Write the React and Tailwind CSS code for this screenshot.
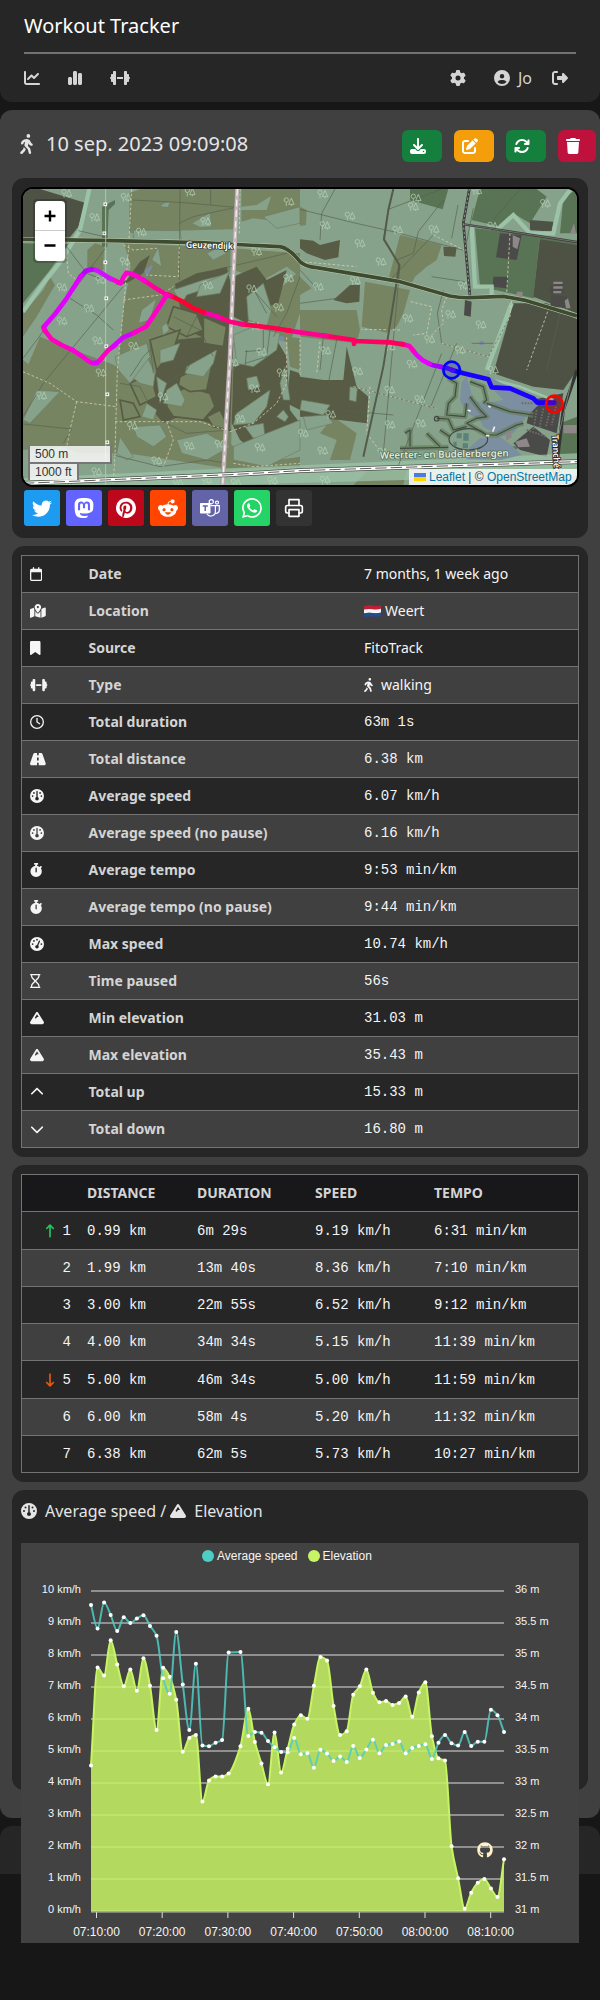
import React from "react";
import {
  FaChartLine, FaChartSimple, FaDumbbell, FaGear, FaCircleUser, FaRightFromBracket, FaPersonWalking,
  FaDownload, FaPenToSquare, FaArrowsRotate, FaTrash, FaRegCalendar, FaMapLocationDot, FaBookmark,
  FaRegClock, FaRoad, FaGauge, FaGaugeHigh, FaStopwatch, FaRegHourglass, FaMountain, FaChevronUp,
  FaChevronDown, FaArrowUpLong, FaArrowDownLong, FaGithub, FaRedditAlien,
} from "react-icons/fa6";
import { BsTwitter, BsMastodon, BsPinterest, BsWhatsapp } from "react-icons/bs";
import { FiPrinter } from "react-icons/fi";

function Header() {
  return (
    <header className="h-[102px] rounded-b-xl bg-[#262626] px-6">
      <div className="flex h-[52px] items-center text-xl text-white">Workout Tracker</div>
      <div className="h-[2px] bg-[#737373]" />
      <nav className="flex h-12 items-center justify-between pr-2 text-base text-[#d4d4d4]">
        <div className="flex items-center gap-7">
          <FaChartLine />
          <FaChartSimple className="w-3.5" />
          <FaDumbbell className="h-4 w-5" />
        </div>
        <div className="flex items-center">
          <FaGear className="mr-7" />
          <FaCircleUser className="mr-2" />
          <span className="mr-5">Jo</span>
          <FaRightFromBracket />
        </div>
      </nav>
    </header>
  );
}

function TitleBar() {
  return (
    <div className="flex h-[68px] justify-between pl-2">
      <div className="flex h-[68px] items-center text-xl text-[#e5e5e5]">
        <FaPersonWalking className="mr-[13px] w-[13px]" />
        <h2>10 sep. 2023 09:09:08</h2>
      </div>
      <div className="-mr-2 flex gap-3 pt-5 text-base text-white">
        <button className="flex h-8 w-10 items-center rounded-md bg-[#15803d] pl-2"><FaDownload /></button>
        <button className="flex h-8 w-10 items-center rounded-md bg-[#f59e0b] pl-2"><FaPenToSquare /></button>
        <button className="flex h-8 w-10 items-center rounded-md bg-[#15803d] pl-2"><FaArrowsRotate /></button>
        <button className="flex h-8 w-[38px] items-center rounded-md bg-[#be123c] pl-2"><FaTrash className="w-3.5" /></button>
      </div>
    </div>
  );
}

const TREES = [
  [200, 70], [378, 82], [284, 142], [424, 186], [617, 154], [570, 66], [867, 95], [770, 245], [866, 325], [375, 274],
  [186, 352], [267, 415], [186, 453], [624, 346], [293, 512], [401, 528], [767, 468], [785, 546], [836, 412], [755, 356],
  [302, 330], [968, 72], [1248, 84], [1240, 110], [1050, 138], [975, 166], [1193, 180], [1302, 178], [1080, 220], [1143, 275],
  [1636, 100], [1478, 168], [1430, 62], [1066, 332], [955, 350], [1390, 346], [1224, 445], [1352, 433], [1443, 464],
  [1289, 508], [1380, 540], [977, 542], [1170, 530], [1236, 582], [1073, 604], [1169, 660], [1259, 688], [992, 733],
  [1170, 764], [968, 842], [910, 790], [1148, 846], [125, 677], [303, 608], [489, 680], [568, 828], [397, 768], [720, 746],
  [764, 656], [846, 608], [780, 832], [660, 822], [470, 872], [708, 938], [534, 938], [620, 930], [818, 932], [975, 930],
  [1262, 760], [1480, 600], [1366, 940], [290, 905], [700, 578], [208, 940],
];

const HEATH = [
  "388,70 420,57 708,57 700,178 520,182 470,195 388,188",
  "262,240 285,220 312,228 310,300 262,296",
  "372,220 560,228 692,240 690,300 640,500 700,600 690,945 660,892 380,850 345,850 352,600 370,420 392,290",
  "69,430 130,360 150,320 165,345 110,440 69,500",
  "69,620 120,500 220,540 330,580 352,590 345,850 235,850 190,830 69,840",
  "724,57 900,57 850,75 810,80 770,105 724,110",
  "724,155 760,145 900,160 900,57 820,57 800,120 724,120",
  "900,420 1070,420 1080,480 1070,520 900,500",
  "1095,335 1230,360 1210,430 1190,470 1160,488 1085,470",
  "1200,195 1325,225 1310,270 1280,290 1245,320 1230,350 1165,330",
  "700,235 900,250 900,320 860,290 790,330 700,300",
  "750,440 900,300 900,430 870,520 760,480",
  "1000,740 1070,790 1050,870 990,870 1010,810 960,790",
  "69,570 160,640 69,740",
  "1100,905 1220,900 1210,945 1060,945",
  "900,110 920,120 918,165 900,168",
  "900,320 935,355 900,375",
  "690,820 760,880 900,860 900,890 690,900",
  "860,500 900,505 900,600 870,590",
];

const BROWN = [
  "525,342 590,310 640,300 680,290 690,330 700,470 690,560 625,510 560,480 540,410",
  "700,320 770,290 800,330 860,300 835,400 770,420 740,460 700,440",
  "470,600 520,510 620,500 700,520 690,780 600,750 560,730 490,760 440,700",
  "700,590 780,560 830,510 860,560 870,720 900,760 890,810 800,870 720,810 695,760",
  "900,620 970,630 1030,630 1040,530 1070,650 1105,680 1100,760 1020,750 900,740",
  "900,208 940,212 960,225 1020,210 1015,262 975,270 920,250 900,235",
  "1000,390 1050,345 1080,345 1078,395 1040,400",
  "1330,230 1370,232 1366,260 1332,258",
  "345,345 380,330 420,275 450,255 430,310 380,340",
  "870,600 900,610 900,720 860,700",
];

const ISLANDS = [
  "520,360 610,330 690,310 650,345 560,375 545,402",
  "425,420 470,385 450,450 415,460",
  "485,470 500,458 508,480 490,495",
  "700,495 760,470 840,490 830,540 760,590 710,580",
  "740,380 790,340 815,420 800,470 745,450",
  "500,660 530,640 555,690 545,710 490,700",
  "600,345 680,310 690,300 660,370 590,380",
  "560,590 650,540 640,580 610,620 555,610",
  "740,625 770,618 780,650 745,660",
  "710,730 810,660 800,710 760,760 700,765",
  "840,640 855,590 870,690 850,690",
  "735,770 790,760 795,800 760,805",
  "700,830 800,790 900,750 900,840 800,890 700,870",
  "830,740 850,720 865,740 855,755",
  "395,620 430,540 465,610 460,650 420,640",
  "470,620 500,640 480,700",
  "345,560 440,520 450,560 390,640 355,600",
  "440,700 470,720 460,750 425,740",
  "110,660 180,665 90,760 69,750",
  "480,540 540,520 520,570 480,580",
  "400,770 480,765 500,800 460,830 410,800",
  "530,810 620,790 690,830 620,870 545,850",
  "360,800 400,860 380,870 350,850",
  "905,690 990,705 970,735 900,720",
  "910,740 980,735 1000,760 920,780",
  "575,160 630,128 635,170 600,172",
  "490,100 510,95 505,112 480,110",
  "400,180 540,182 545,215 400,215",
  "455,270 475,230 485,290",
  "620,250 660,230 680,250 640,270",
  "790,140 900,110 900,160 830,175",
  "1050,650 1072,655 1068,695 1048,690",
];

const MEADOW = [
  "69,220 205,222 150,300 69,400",
  "1230,57 1345,57 1328,118 1230,90",
  "1440,57 1610,57 1640,80 1590,160 1540,130 1500,170 1415,150",
  "1425,175 1620,195 1600,385 1440,350",
  "1620,195 1731,215 1731,300 1600,385",
  "1690,85 1731,57 1731,190 1680,190",
  "1680,760 1731,740 1731,870 1680,870",
  "1720,450 1731,450 1731,500 1700,480",
  "306,110 345,90 345,102 326,120 322,230 306,230",
  "1455,820 1560,830 1500,870 1440,850",
];

const FARM = [
  "69,57 120,57 255,98 235,170 205,208 69,205",
  "1620,208 1731,225 1731,430 1600,380",
  "1540,400 1640,400 1731,448 1731,600 1690,660 1600,650 1480,610",
  "1590,150 1660,155 1655,185 1590,180",
];

const GREYS = [
  "1500,190 1565,195 1550,270 1488,262",
  "1480,320 1525,320 1520,355 1478,350",
  "1395,390 1415,395 1412,440 1392,436",
  "1540,820 1600,770 1650,810 1640,860 1560,840",
  "1595,690 1690,670 1670,790 1580,760",
  "1650,350 1690,335 1690,370 1650,372",
  "1655,375 1700,380 1715,415 1650,410",
];

const TRACKS = [
  "69,565 320,230 M369,350 130,640 69,740",
  "210,385 290,435 340,480",
  "235,182 313,200",
  "200,230 260,310 300,325",
  "395,90 540,97 708,112",
  "540,57 538,330",
  "632,57 632,105",
  "538,160 580,140 708,112",
  "520,355 690,290 860,250",
  "900,118 1060,158 1180,185 1395,242",
  "1180,57 1165,120 1150,210 1200,285 1150,850",
  "1005,57 965,130 960,210",
  "1325,57 1165,118",
  "1330,90 1255,185 1240,250 1190,270",
  "1420,115 1400,215 M1374,105 1355,205",
  "1300,195 1170,330",
  "1330,360 1312,430 1325,520 1465,560",
  "1530,440 1465,560",
  "1295,320 1395,335",
  "1010,510 985,640 M970,500 960,600",
  "1415,520 1480,520 M1060,650 1310,715",
  "1010,720 1180,735",
  "1325,550 1190,900",
  "1370,520 1290,715",
  "69,762 215,777 190,820",
  "740,540 735,590 M790,480 790,540 735,545 M810,480 800,560 735,580",
  "390,620 430,560 450,540 M360,640 420,650 440,690",
  "500,760 560,790 690,780",
  "340,855 480,890 620,870 670,878",
  "450,520 460,610 M600,520 560,600 500,640",
  "520,440 600,480 640,560 M600,420 560,500",
  "700,320 760,360 830,440 M740,320 800,430",
  "900,320 860,430 820,500",
  "1680,430 1640,600",
  "1560,57 1480,150",
  "900,300 955,360 M900,400 1010,385",
];

const DASHED = [
  "395,57 386,230 370,420 352,600 345,850 340,940",
  "69,605 150,640 230,695 350,710",
  "230,695 210,780 200,830",
  "538,230 535,320 440,315",
  "370,390 480,375 520,350",
  "345,755 500,755 600,755 690,785",
  "500,755 520,810 490,890",
  "690,785 760,760 830,700 860,640 860,500",
  "700,880 760,890 900,880",
  "1300,195 1395,242",
  "1200,480 1085,478",
  "1232,395 1295,410 1280,490 1240,495",
  "1340,380 1325,420 1330,460 1290,500",
  "1325,520 1465,560 1530,440 1535,390",
  "900,615 900,500",
  "1060,650 1310,715",
  "1530,190 1520,370",
  "1643,425 1580,600",
  "200,260 205,310 230,330",
  "720,57 718,190",
  "370,225 400,240 470,235",
  "900,275 960,280 1070,290",
  "1110,650 1100,790 1130,830",
  "960,515 950,610",
];

const RESORT_PATHS = [
  "1345,625 1370,640 1365,680 1345,700 1340,735 1395,740 1400,700",
  "1410,635 1450,650 1460,690 1450,700",
  "1410,680 1440,720 1460,740 1430,745 1400,760 1460,795 1490,795 1550,765 1570,760",
  "1310,745 1345,747 1360,780 1400,770",
  "1460,700 1530,725 1600,735",
  "1230,830 1230,780 1215,790 M1280,790 1320,830 M1320,780 1350,800 M1200,835 1345,832",
];

const SEGMENTS = [
  ["#1a00ff", "1663,698 1612,698 1600,685 1530,655 1475,652 1465,628 1390,610 1355,600"],
  ["#5a10f0", "1360,601 1340,594 1320,590"],
  ["#a800ff", "1325,591 1300,586 1285,580"],
  ["#e800ff", "1290,582 1270,572 1250,555 1238,540"],
  ["#ff00c0", "1240,542 1228,528 1205,522"],
  ["#ff0060", "1210,523 1170,517 1062,513 1062,522 1062,510 970,497"],
  ["#ff0090", "980,498 900,487 860,481"],
  ["#ff0050", "870,482 820,474 720,462"],
  ["#ff0080", "730,463 690,455 655,441"],
  ["#f800b0", "660,443 635,434 605,425"],
  ["#ff0030", "612,427 580,415 545,393 505,374"],
  ["#ff00a0", "512,378 500,374 460,350 430,330"],
  ["#ff00d0", "435,333 405,315 380,308 370,322 362,340 325,322"],
  ["#d010ff", "332,327 295,303 280,298 262,301"],
  ["#b800ff", "275,298 258,302 240,322"],
  ["#e000ff", "244,316 225,346 200,385 165,432 130,472 138,486"],
  ["#ff00c0", "132,478 155,508 185,525 220,541"],
  ["#f800d8", "215,538 245,558 265,573 276,579 290,579"],
  ["#e000ff", "280,579 292,578 305,565"],
  ["#ff00c0", "300,570 325,540 345,526"],
  ["#d800ff", "338,530 370,502 410,485"],
  ["#ff00c8", "400,489 438,470 465,430 500,376"],
];

function Tree({ x, y }) {
  return (
    <g transform={`translate(${x} ${y})`} fill="none" stroke="#b5d3b6" strokeWidth="2.2">
      <circle cx="-8" cy="-5" r="6.5" />
      <path d="M-8 2V13M7 -11L-1 8H15ZM7 8V13" />
    </g>
  );
}

function MapCanvas() {
  const poly = (list, fill) => list.map((p, i) => <polygon key={i} points={p} fill={fill} />);
  return (
    <svg className="block h-[296px] w-[554px]" viewBox="69 57 1662 888">
      <rect x="69" y="57" width="1662" height="888" fill="#87a28b" />
      {poly(HEATH, "#778462")}
      {poly(BROWN, "#595c45")}
      <g fill="#778462" stroke="#595c45" strokeWidth="5">
        <polygon points="505,680 560,650 630,670 645,710 610,750 520,740 500,710" />
        <polygon points="540,620 600,590 635,590 620,660 570,665 535,645" />
        <polygon points="390,640 450,610 470,680 420,705" />
        <polygon points="360,690 400,700 420,740 370,750" />
        <polygon points="520,410 590,430 610,480 560,500 500,470" />
        <polygon points="610,440 680,470 670,530 610,520" />
        <polygon points="450,510 540,480 520,540 470,600" />
        <polygon points="620,740 660,720 690,780 640,770" />
      </g>
      <g fill="#87a28b" stroke="#6d7d62" strokeWidth="2">
        {ISLANDS.map((p, i) => <polygon key={i} points={p} />)}
      </g>
      {poly(MEADOW, "#587454")}
      {poly(FARM, "#4d5245")}
      {poly(GREYS, "#4a4a48")}
      <g fill="none" stroke="#9bc3a7" strokeWidth="13">
        <path d="M268 57L240 180L185 270L130 340L69 425" />
        <path d="M1415 170L1425 350H1475V375M1535 400L1460 600M1490 180L1540 135L1590 190H1660L1680 100L1710 60" />
        <path d="M1480 630L1560 650L1660 690" strokeWidth="8" />
      </g>
      <path d="M69 925L690 895L1731 850V915L690 945H69Z" fill="#9bc3a7" opacity=".75" />

      <path d="M1385 635L1400 620L1420 690L1450 700L1510 690L1480 660L1470 620L1540 660L1620 700L1580 740L1540 790L1500 800L1450 770L1440 750L1400 730L1380 690Z" fill="#7c8fa0" />
      <path d="M1410 830L1440 805L1500 800L1540 830L1565 855L1500 870L1400 868Z" fill="#7c8fa0" />
      <path d="M438 325L435 300L455 285L458 290Z" fill="#7a8ba5" />
      <circle cx="845" cy="506" r="8" fill="#7a8ba5" />
      <circle cx="1445" cy="519" r="7" fill="#7a8ba5" />
      <g fill="none" stroke="#66825f" strokeWidth="16" strokeLinejoin="round" opacity=".7">
        {RESORT_PATHS.map((p, i) => <path key={i} d={"M" + p} />)}
      </g>
      <g fill="none" stroke="#444843" strokeWidth="3.5" strokeLinejoin="round">
        {RESORT_PATHS.map((p, i) => <path key={i} d={"M" + p} />)}
        <ellipse cx="1405" cy="808" rx="58" ry="32" />
        <circle cx="1310" cy="746" r="7" />
      </g>
      <g fill="#8d8787">
        <path d="M1538 195L1560 205L1552 238L1538 230Z" />
        <path d="M1660 335H1688V342H1660ZM1660 349H1688V356H1660ZM1660 363H1684V370H1660Z" />
        <path d="M1515 790L1530 782L1536 800L1520 812ZM1545 815L1580 805L1590 830L1555 832ZM1690 765H1730V790H1690Z" />
        <path d="M1710 190L1722 160L1728 190ZM1550 365H1568V382H1550ZM1694 392L1704 385L1712 415H1698Z" />
      </g>
      <g fill="none" stroke="#6f6a68" strokeWidth="6" strokeDasharray="5 4">
        <path d="M1610 720L1600 780M1630 715L1618 775M1650 720L1638 770M1668 710L1655 765M1565 700H1600M1580 780L1640 800" />
      </g>
      <g fill="#5b8279">
        <path d="M1370 790H1385V805H1370ZM1390 790H1406V812H1390ZM1360 815H1370V828H1360ZM1388 820H1404V835H1388Z" />
      </g>

      <g fill="none" stroke="#566150" strokeWidth="2">
        {TRACKS.map((p, i) => <path key={i} d={"M" + p} />)}
      </g>
      <g fill="none" stroke="#d8cfae" strokeWidth="2.4" strokeDasharray="8 6">
        {DASHED.map((p, i) => <path key={i} d={"M" + p} />)}
      </g>
      {TREES.map(([x, y], i) => <Tree key={i} x={x} y={y} />)}

      <path d="M1180 57L1165 120L1152 208L1198 285L1150 590L1090 860" fill="none" stroke="#555b4b" strokeWidth="6" />
      <g fill="none" strokeLinejoin="round">
        <path d="M1408 57L1390 160L1410 380" stroke="#3c3c3c" strokeWidth="8" />
        <path d="M1408 57L1390 160L1410 380" stroke="#c9c3c3" strokeWidth="2" strokeDasharray="7 6" />
        <path d="M1392 163L1731 216" stroke="#3c3c3c" strokeWidth="7" />
        <path d="M1392 163L1731 216" stroke="#8d8a86" strokeWidth="2" />
        <path d="M1731 600L1690 720L1672 870" stroke="#333633" strokeWidth="10" />
        <path d="M1715 630L1675 800" stroke="#9a9d96" strokeWidth="2" />
        <path d="M69 208L300 211L600 218L840 230Q870 236 900 275Q915 290 950 293L1200 335L1350 378Q1380 384 1410 383L1510 379L1580 392L1731 438" stroke="#c0cfb0" strokeWidth="14" />
        <path d="M69 208L300 211L600 218L840 230Q870 236 900 275Q915 290 950 293L1200 335L1350 378Q1380 384 1410 383L1510 379L1580 392L1731 438" stroke="#3f4b30" strokeWidth="11" />
        <path d="M712 57L698 360L690 560L668 945" stroke="#9c9092" strokeWidth="14" />
        <path d="M712 57L698 360L690 560L668 945" stroke="#c5b9bb" strokeWidth="11" />
        <path d="M712 57L698 360L690 560L668 945" stroke="#f4eeee" strokeWidth="4" strokeDasharray="20 12" />
        <path d="M69 940L690 914L900 902L1731 875" stroke="#4b5047" strokeWidth="14" />
        <path d="M69 940L690 914L900 902L1731 875" stroke="#ffffff" strokeWidth="10" />
        <path d="M69 940L690 914L900 902L1731 875" stroke="#3c3c3c" strokeWidth="2.5" strokeDasharray="34 12" />
      </g>
      <path d="M317 57V945" stroke="#b9cdb5" strokeWidth="2.5" />
      {[[316, 103], [313, 190], [316, 277], [319, 385], [319, 529], [322, 673], [322, 817]].map(([x, y]) => (
        <rect key={y} x={x - 4} y={y - 4} width="8" height="8" fill="#777" stroke="#fff" strokeWidth="3" />
      ))}
      <path d="M1478 785L1484 770M1403 720L1412 724M1465 708L1472 712M1458 797H1468" stroke="#eee" strokeWidth="5" />

      <g fontFamily="'Noto Sans', sans-serif" fontWeight="600" fill="#fff" strokeWidth="5" strokeLinejoin="round" lengthAdjust="spacingAndGlyphs">
        <text x="557" y="233" fontSize="27" textLength="142" stroke="#39422f" paintOrder="stroke" transform="rotate(2 557 233)">Geuzendijk</text>
        <text x="1140" y="866" fontSize="29" textLength="386" fontWeight="500" fill="#e9f3e6" stroke="#55735a" paintOrder="stroke" transform="rotate(-1 1140 866)">Weerter- en Budelerbergen</text>
        <text x="1656" y="794" fontSize="27" textLength="116" stroke="#222" paintOrder="stroke" transform="rotate(87 1656 794)">Tranchée</text>
      </g>

      <g fill="none" strokeWidth="14" strokeLinecap="round" strokeLinejoin="round">
        {SEGMENTS.map(([c, p], i) => <polyline key={i} points={p} stroke={c} />)}
      </g>
      <circle cx="1355" cy="600" r="25" fill="#0000ff" fillOpacity=".2" stroke="#0000ff" strokeWidth="8" />
      <circle cx="1663" cy="702" r="25" fill="#ff0000" fillOpacity=".2" stroke="#ff0000" strokeWidth="8" />
    </svg>
  );
}

function TeamsIcon() {
  return (
    <svg width="20" height="18" viewBox="0 0 20 18" fill="none" stroke="#fff" strokeWidth="1.2">
      <circle cx="11.300" cy="2.700" r="2.100" />
      <circle cx="17" cy="3.600" r="1.500" />
      <path d="M10.500 6.600H15.400V12.300A4.600 4.600 0 0 1 6.900 14.800" />
      <path d="M15.400 6.600H19.300V11.400A3.100 3.100 0 0 1 15.200 14.200" />
      <path fill="#fff" stroke="none" d="M.8 4H9.700A.8.8 0 0 1 10.500 4.800V13.700A.8.8 0 0 1 9.700 14.500H.8A.8.8 0 0 1 0 13.700V4.800A.8.8 0 0 1 .8 4Z" />
      <path stroke="#6264a7" strokeWidth="1.500" d="M2.700 6.900H7.800M5.250 6.900V12" />
    </svg>
  );
}

const SHARE = [
  [BsTwitter, "bg-[#1d9bf0]"],
  [BsMastodon, "bg-[#6364ff]"],
  [BsPinterest, "bg-[#bd081c]"],
  [FaRedditAlien, "bg-[#ff4500]"],
  [TeamsIcon, "bg-[#6264a7]"],
  [BsWhatsapp, "bg-[#25d366]"],
  [FiPrinter, "bg-[#333333]"],
];

function MapPanel() {
  return (
    <section className="h-[360px] rounded-xl bg-[#262626] p-[9px]">
      <div className="relative h-[300px] overflow-hidden rounded-xl border-2 border-black font-['Liberation_Sans',sans-serif]">
        <MapCanvas />
        <div className="absolute left-[10px] top-[10px] rounded border-2 border-black/20">
          <div className="w-[30px] overflow-hidden rounded-sm bg-white text-black">
            <div className="flex h-[30px] items-center justify-center border-b border-[#ccc]">
              <svg width="12" height="12" viewBox="0 0 12 12"><path d="M6 .5V11.5M.5 6H11.5" stroke="#000" strokeWidth="2.400" /></svg>
            </div>
            <div className="flex h-[30px] items-center justify-center">
              <svg width="12" height="12" viewBox="0 0 12 12"><path d="M.5 5.500H11.5" stroke="#000" strokeWidth="2.400" /></svg>
            </div>
          </div>
        </div>
        <div className="absolute bottom-[5px] left-[5px] text-[12px] leading-4 text-[#333]">
          <div className="h-[18px] w-[84px] border-x-2 border-b-2 border-[#777] bg-white/80 pl-[5px]">500 m</div>
          <div className="-mt-[2px] h-[18px] w-[51px] whitespace-nowrap border-x-2 border-t-2 border-[#777] bg-white/80 pl-[5px]">1000 ft</div>
        </div>
        <div className="absolute bottom-0 right-0 flex h-4 w-[168px] items-center whitespace-pre bg-white/80 pl-[5px] text-[12px] text-[#333]">
          <svg className="mr-[3px] shrink-0" width="12" height="8" viewBox="0 0 12 8"><path fill="#4c7be1" d="M0 0h12v4H0z" /><path fill="#ffd500" d="M0 4h12v4H0z" /></svg>
          <span className="text-[#0078a8]">Leaflet</span> | © <span className="text-[#0078a8]">OpenStreetMap</span>
        </div>
      </div>
      <div className="flex gap-[6px] pl-[3px] pt-[3px]">
        {SHARE.map(([Icon, bg], i) => (
          <div key={i} className={`flex h-9 w-9 items-center justify-center rounded-[3px] text-xl text-white ${bg}`}><Icon /></div>
        ))}
      </div>
    </section>
  );
}

function DutchFlag() {
  return (
    <svg className="mr-1" width="17" height="12" viewBox="0 0 17 12">
      <path d="M0 1.2Q4-.4 8.500.5T17 .2V4Q13 5 8.500 4.300T0 4.800Z" fill="#bd2034" />
      <path d="M0 4.600Q4 3.400 8.500 4.200T17 3.800V7.800Q13 8.900 8.500 8.100T0 8.600Z" fill="#f5f5f5" />
      <path d="M0 8.400Q4 7.200 8.500 8T17 7.600V11Q13 12 8.500 11.400T0 12Z" fill="#214c93" />
    </svg>
  );
}

const W = { narrow: "w-[10.5px]", slim: "w-[12.25px]", square: "w-[14px]", wide: "w-[15.75px]", widest: "w-[17.5px]" };
const STATS = [
  [FaRegCalendar, W.slim, "Date", "7 months, 1 week ago"],
  [FaMapLocationDot, W.wide, "Location", <><DutchFlag />Weert</>],
  [FaBookmark, W.narrow, "Source", "FitoTrack"],
  [FaDumbbell, W.widest, "Type", <><FaPersonWalking className="mr-2 w-[9px]" />walking</>],
  [FaRegClock, W.square, "Total duration", "63m 1s", 1],
  [FaRoad, W.wide, "Total distance", "6.38 km", 1],
  [FaGauge, W.square, "Average speed", "6.07 km/h", 1],
  [FaGauge, W.square, "Average speed (no pause)", "6.16 km/h", 1],
  [FaStopwatch, W.slim, "Average tempo", "9:53 min/km", 1],
  [FaStopwatch, W.slim, "Average tempo (no pause)", "9:44 min/km", 1],
  [FaGaugeHigh, W.square, "Max speed", "10.74 km/h", 1],
  [FaRegHourglass, W.narrow, "Time paused", "56s", 1],
  [FaMountain, W.square, "Min elevation", "31.03 m", 1],
  [FaMountain, W.square, "Max elevation", "35.43 m", 1],
  [FaChevronUp, W.square, "Total up", "15.33 m", 1],
  [FaChevronDown, W.square, "Total down", "16.80 m", 1],
];

function StatsPanel() {
  return (
    <section className="mt-2 h-[611px] rounded-xl bg-[#262626] p-[9px]">
      <div className="border-x border-t border-[#737373] text-sm">
        {STATS.map(([Icon, width, label, value, mono], i) => (
          <div key={label} className={`flex h-[37px] items-center border-b border-[#737373] pl-2 text-[#f5f5f5] ${i % 2 ? "bg-[#404040]" : "bg-[#262626]"}`}>
            <div className="flex w-[58.5px]"><Icon className={`h-3.5 ${width}`} /></div>
            <div className="w-[275.5px] font-bold text-[#d4d4d4]">{label}</div>
            <div className={mono ? "pb-px font-['Liberation_Mono',monospace]" : "flex items-center"}>{value}</div>
          </div>
        ))}
      </div>
    </section>
  );
}

const SPLITS = [
  ["1", "0.99 km", "6m 29s", "9.19 km/h", "6:31 min/km"],
  ["2", "1.99 km", "13m 40s", "8.36 km/h", "7:10 min/km"],
  ["3", "3.00 km", "22m 55s", "6.52 km/h", "9:12 min/km"],
  ["4", "4.00 km", "34m 34s", "5.15 km/h", "11:39 min/km"],
  ["5", "5.00 km", "46m 34s", "5.00 km/h", "11:59 min/km"],
  ["6", "6.00 km", "58m 4s", "5.20 km/h", "11:32 min/km"],
  ["7", "6.38 km", "62m 5s", "5.73 km/h", "10:27 min/km"],
];
const SPLIT_COLS = "grid grid-cols-[65px_110px_118px_119px_1fr] items-center border-b border-[#737373]";

function SplitsPanel() {
  return (
    <section className="mt-2 h-[317px] rounded-xl bg-[#262626] p-[9px]">
      <div className="border-x border-t border-[#737373] text-sm">
        <div className={`h-[37px] bg-[#18181b] font-bold text-[#d4d4d4] ${SPLIT_COLS}`}>
          <span /><span>DISTANCE</span><span>DURATION</span><span>SPEED</span><span>TEMPO</span>
        </div>
        {SPLITS.map((r, i) => (
          <div key={i} className={`font-['Liberation_Mono',monospace] text-[#f5f5f5] ${SPLIT_COLS} ${i % 2 ? "bg-[#404040]" : "bg-[#262626]"} ${i === 0 || i === 4 ? "h-[38px]" : "h-[37px]"}`}>
            <span className="flex items-center justify-end pr-4">
              {i === 0 && <FaArrowUpLong className="mr-[8px] h-4 w-[10px] text-[#22c55e]" />}
              {i === 4 && <FaArrowDownLong className="mr-[8px] h-4 w-[10px] text-[#ea580c]" />}
              {r[0]}
            </span>
            {r.slice(1).map((c) => <span key={c}>{c}</span>)}
          </div>
        ))}
      </div>
    </section>
  );
}

// Minutes since the start; the pause between minutes 21 and 24 holds a single sample.
const MINUTES = Array.from({ length: 64 }, (_, i) => (i === 22 ? 22.8 : i)).filter((m) => m !== 23);
const SPEED = [
  9.56, 8.83, 9.64, 9.25, 8.75, 9.18, 9, 9.14, 9.24, 8.91, 8.6, 7.27, 6.79, 8.72, 7.08, 5.66, 7.73, 5.17, 5.15, 5.26,
  5.34, 8.08, 8.09, 5.47, 5.59, 5.57, 5.31, 5.12, 4.97, 4.96, 5.41, 4.9, 4.93, 4.48, 5.04, 4.92, 4.69, 4.83, 4.66, 5.16,
  4.78, 5.05, 5.35, 4.93, 5.19, 5.22, 5.3, 4.93, 5.09, 5.16, 5.21, 4.75, 5.26, 5.5, 5.24, 5.17, 5.59, 5.16, 5.29, 5.29,
  6.29, 6.12, 5.59,
];
const ELEVATION = [
  33.275, 34.805, 34.68, 35.23, 34.85, 34.51, 34.775, 34.44, 34.95, 34.52, 33.83, 34.8, 34.66, 34.3, 33.49, 33.705, 33.75,
  32.71, 33.04, 33.1, 33.1, 33.15, 33.575, 34.16, 33.64, 33.305, 32.98, 33.79, 33.165, 33.535, 33.915, 34.06, 34.005,
  34.52, 34.97, 34.915, 34.205, 33.75, 33.81, 34.38, 34.51, 34.775, 34.41, 34.26, 34.28, 34.22, 34.25, 34.35, 34.035,
  34.415, 34.575, 33.73, 33.385, 33.35, 32.01, 31.51, 31.035, 31.285, 31.44, 31.5, 31.35, 31.22, 31.81,
];
const px = (i) => 70 + MINUTES[i] * 6.556;
const speedPts = SPEED.map((v, i) => [px(i), 48 + (10 - v) * 32]);
const elevPts = ELEVATION.map((v, i) => [px(i), 48 + (36 - v) * 64]);

// Cubic interpolation that never overshoots its samples.
function curve(p) {
  const s = p.slice(1).map((q, i) => (q[1] - p[i][1]) / (q[0] - p[i][0]));
  const m = p.map((_, i) => {
    if (i === 0) return s[0];
    if (i === p.length - 1) return s[i - 1];
    return s[i - 1] * s[i] <= 0 ? 0 : (2 * s[i - 1] * s[i]) / (s[i - 1] + s[i]);
  });
  let d = `M${p[0][0]} ${p[0][1]}`;
  for (let i = 1; i < p.length; i++) {
    const h = (p[i][0] - p[i - 1][0]) / 3;
    d += `C${p[i - 1][0] + h} ${p[i - 1][1] + m[i - 1] * h} ${p[i][0] - h} ${p[i][1] - m[i] * h} ${p[i][0]} ${p[i][1]}`;
  }
  return d;
}

function Chart() {
  const elev = curve(elevPts);
  return (
    <svg className="relative z-10 block h-[400px] w-[558px] bg-[#424242]" viewBox="0 0 558 400" fontFamily="'Liberation Sans', sans-serif">
      <circle cx="187" cy="13" r="6" fill="#4ecdc4" />
      <text x="196" y="17" fontSize="12" fill="#f5f5f5">Average speed</text>
      <circle cx="293" cy="13" r="6" fill="#c7f464" />
      <text x="301.500" y="17" fontSize="12" fill="#f5f5f5">Elevation</text>
      {Array.from({ length: 11 }, (_, i) => (
        <g key={i}>
          <path d={`M70 ${48 + i * 32}H483`} stroke="#909090" strokeWidth="2" />
          <text x="60" y={50 + i * 32} fontSize="11" fill="#f5f5f5" textAnchor="end">{10 - i} km/h</text>
          <text x="494" y={50 + i * 32} fontSize="11" fill="#f5f5f5">{36 - i / 2} m</text>
        </g>
      ))}
      {["07:10:00", "07:20:00", "07:30:00", "07:40:00", "07:50:00", "08:00:00", "08:10:00"].map((t, i) => (
        <g key={t}>
          <path d={`M${75.5 + i * 65.7} 369V375`} stroke="#e0e0e0" />
          <text x={75.5 + i * 65.7} y="393" fontSize="12" fill="#f5f5f5" textAnchor="middle">{t}</text>
        </g>
      ))}
      <path d={`${elev}V368H70Z`} fill="#c7f464" fillOpacity=".85" />
      <path d={elev} fill="none" stroke="#c7f464" strokeWidth="2" />
      <path d={curve(speedPts)} fill="none" stroke="#4ecdc4" strokeOpacity=".85" strokeWidth="2" />
      <path d="M70 369H483" stroke="#bdbdbd" />
      {[...elevPts, ...speedPts].map(([x, y], i) => <circle key={i} cx={x} cy={y} r="2" fill="#fff" />)}
    </svg>
  );
}

function ChartPanel() {
  return (
    <section className="mt-2 h-[300px] rounded-xl bg-[#262626] p-[9px]">
      <h3 className="mb-5 flex h-6 items-center whitespace-pre text-base text-[#e5e5e5]">
        <FaGauge className="mr-2" />Average speed / <FaMountain className="mr-2" />Elevation
      </h3>
      <Chart />
    </section>
  );
}

export default function App() {
  return (
    <div className="h-[2000px] w-[600px] overflow-hidden bg-[#171717] font-['Noto_Sans',sans-serif]">
      <Header />
      <main className="mt-2 h-[1708px] rounded-xl bg-[#404040] px-3">
        <TitleBar />
        <MapPanel />
        <StatsPanel />
        <SplitsPanel />
        <ChartPanel />
      </main>
      <footer className="mt-2 flex h-12 items-center justify-end rounded-t-xl bg-[#262626] pr-[107px]">
        <FaGithub className="relative z-20 text-base text-[#fef3c7]" />
      </footer>
    </div>
  );
}
